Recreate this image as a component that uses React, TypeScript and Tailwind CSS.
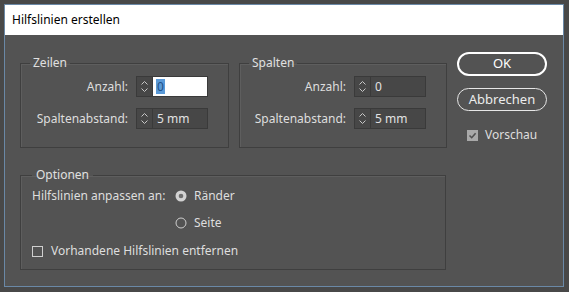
import React from "react";

const font = { fontFamily: '"Noto Sans", "Open Sans", sans-serif' };

function Spinner({ value, focused }: { value: string; focused?: boolean }) {
  return (
    <div className="flex h-[21px] w-[72px] border border-[#3a3a3a] bg-[#474747]">
      <div className="flex w-[16px] flex-col items-center justify-center border-r border-[#3a3a3a]">
        <svg width="9" height="15" viewBox="0 0 9 15" fill="none" stroke="#c8c8c8" strokeWidth="1">
          <path d="M1.5 5.5 L4.5 2.5 L7.5 5.5" />
          <path d="M1.5 9.5 L4.5 12.5 L7.5 9.5" />
        </svg>
      </div>
      {focused ? (
        <div className="flex flex-1 items-center bg-white pl-[3px]">
          <span className="bg-[#5a9ad8] px-[1px] leading-[15px] text-[#1f4f86]">{value}</span>
        </div>
      ) : (
        <div className="flex flex-1 items-center pl-[4px] text-[#e2e2e2]">{value}</div>
      )}
    </div>
  );
}

function Group({ title, width }: { title: string; width: string }) {
  return (
    <fieldset className={`${width} h-[93px] border border-[#3f3f3f] pr-[20px] pt-[5px] shadow-[inset_1px_1px_0_#5e5e5e]`}>
      <legend className="ml-[9px] px-[3px] leading-[16px] text-[#e0e0e0]">{title}</legend>
      <div className="grid grid-cols-[1fr_72px] items-center gap-x-[8px] gap-y-[11px]">
        <span className="text-right">Anzahl:</span>
        <Spinner value="0" focused={title === "Zeilen"} />
        <span className="text-right">Spaltenabstand:</span>
        <Spinner value="5 mm" />
      </div>
    </fieldset>
  );
}

function Radio({ checked }: { checked?: boolean }) {
  return (
    <svg width="12" height="12" viewBox="0 0 12 12">
      {checked ? (
        <>
          <circle cx="6" cy="6" r="5.5" fill="#d2d2d2" />
          <circle cx="6" cy="6" r="2.3" fill="#6e6e6e" />
        </>
      ) : (
        <circle cx="6" cy="6" r="5" fill="none" stroke="#cfcfcf" strokeWidth="1" />
      )}
    </svg>
  );
}

export default function App() {
  return (
    <div className="h-[292px] w-[569px] overflow-hidden bg-[#484848] pl-[4px] pt-[4px] text-[12px] text-[#dedede]" style={font}>
      <div className="flex h-[283px] w-[560px] flex-col border border-[#6a88a6]">
        <div className="flex h-[30px] items-center bg-white pl-[7px] text-[12px] text-black">Hilfslinien erstellen</div>
        <div className="flex flex-1 bg-[#535353] pl-[15px]">
          <div className="flex w-[427px] flex-col pt-[20px]">
            <div className="flex gap-[10px]">
              <Group title="Zeilen" width="w-[209px]" />
              <Group title="Spalten" width="w-[208px]" />
            </div>
            <fieldset className="mt-[19px] h-[103px] w-[426px] border border-[#3f3f3f] pl-[11px] pt-[5px] shadow-[inset_1px_1px_0_#5e5e5e]">
              <legend className="px-[4px] leading-[16px] text-[#e0e0e0]">Optionen</legend>
              <div className="flex h-[16px] items-center">
                <span className="w-[143px]">Hilfslinien anpassen an:</span>
                <Radio checked />
                <span className="ml-[7px]">Ränder</span>
              </div>
              <div className="mt-[11px] flex h-[16px] items-center pl-[143px]">
                <Radio />
                <span className="ml-[7px]">Seite</span>
              </div>
              <div className="mt-[12px] flex h-[16px] items-center">
                <span className="h-[11px] w-[11px] border border-[#cfcfcf]" />
                <span className="ml-[8px]">Vorhandene Hilfslinien entfernen</span>
              </div>
            </fieldset>
          </div>
          <div className="ml-[10px] flex w-[90px] flex-col pt-[17px]">
            <button className="h-[24px] rounded-full border-2 border-white text-[13px] text-white">OK</button>
            <button className="mt-[12px] h-[23px] rounded-full border border-[#e6e6e6] text-[13px] text-[#ececec]">Abbrechen</button>
            <div className="mt-[15px] flex items-center pl-[10px]">
              <span className="flex h-[11px] w-[11px] items-center justify-center bg-[#a9a9a9]">
                <svg width="9" height="9" viewBox="0 0 9 9" fill="none" stroke="#505050" strokeWidth="1.6">
                  <path d="M1.5 4.5 L3.7 6.7 L7.6 2.2" />
                </svg>
              </span>
              <span className="ml-[7px]">Vorschau</span>
            </div>
          </div>
        </div>
      </div>
    </div>
  );
}
